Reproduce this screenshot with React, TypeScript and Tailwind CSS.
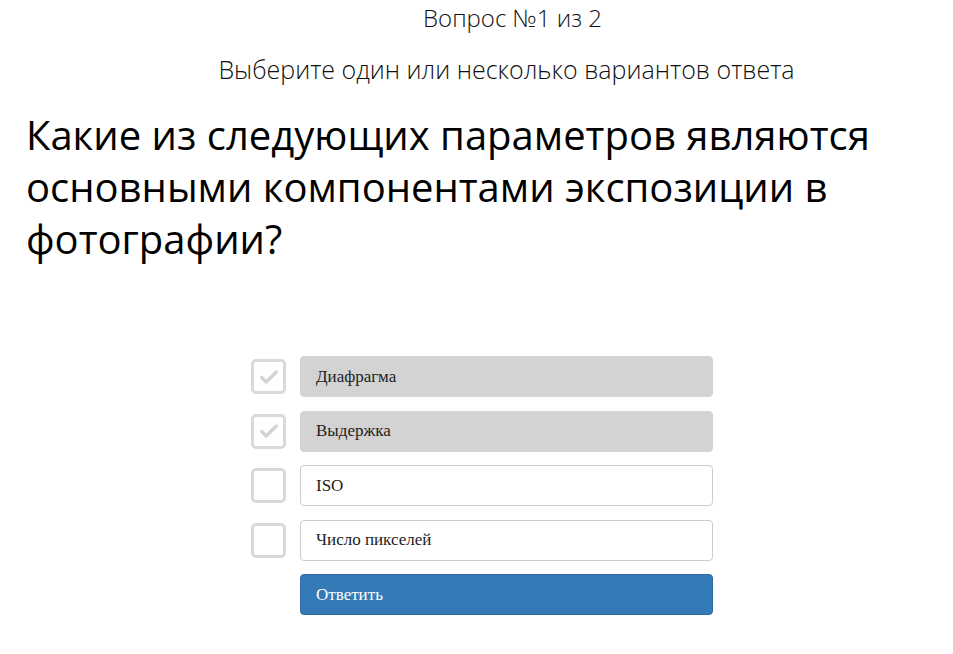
import React, { useState } from 'react';

const OPTIONS = ['Диафрагма', 'Выдержка', 'ISO', 'Число пикселей'];

function CheckIcon() {
  return (
    <svg width="22" height="22" viewBox="0 0 24 24" fill="none" stroke="#d3d3d3" strokeWidth="3.6" strokeLinecap="round" strokeLinejoin="round">
      <path d="M4 12.5l5 5L20 6.5" />
    </svg>
  );
}

export default function App() {
  const [picked, setPicked] = useState<boolean[]>([true, true, false, false]);

  const toggle = (i: number) => setPicked(p => p.map((v, j) => (j === i ? !v : v)));

  return (
    <div className="min-h-screen bg-white text-black" style={{ fontFamily: '"Open Sans", sans-serif' }}>
      {/* header */}
      <div className="pl-[60px] text-center font-light text-[#111]">
        <p className="text-[24px] leading-[36px] pl-[12px]">Вопрос №1 из 2</p>
        <p className="text-[25px] leading-[30px] mt-[18px]">Выберите один или несколько вариантов ответа</p>
      </div>

      {/* question */}
      <h1 className="px-[26px] mt-[25px] text-[40px] leading-[52px] font-normal text-black">
        Какие из следующих параметров являются основными компонентами экспозиции в фотографии?
      </h1>

      {/* answers */}
      <div className="mt-[91px] ml-[251px] w-[462px] flex flex-col gap-[13.5px]" style={{ fontFamily: '"Liberation Serif", serif' }}>
        {OPTIONS.map((o, i) => (
          <div key={o} className="flex items-center gap-[14px] cursor-pointer" onClick={() => toggle(i)}>
            <div className="w-[35px] h-[35px] shrink-0 border-[3px] border-[#d9d9d9] rounded-[5px] flex items-center justify-center">
              {picked[i] && <CheckIcon />}
            </div>
            <div
              className={`flex-1 h-[41px] rounded-[4px] flex items-center pl-[15px] text-[17px] text-[#222] ${
                picked[i] ? 'bg-[#d3d3d3] border border-[#d3d3d3]' : 'bg-white border border-[#cccccc]'
              }`}
            >
              {o}
            </div>
          </div>
        ))}
        <div className="flex">
          <button className="ml-[49px] flex-1 h-[41px] rounded-[4px] bg-[#337ab7] border border-[#2e6da4] text-white text-left pl-[15px] text-[17px]">
            Ответить
          </button>
        </div>
      </div>
    </div>
  );
}
